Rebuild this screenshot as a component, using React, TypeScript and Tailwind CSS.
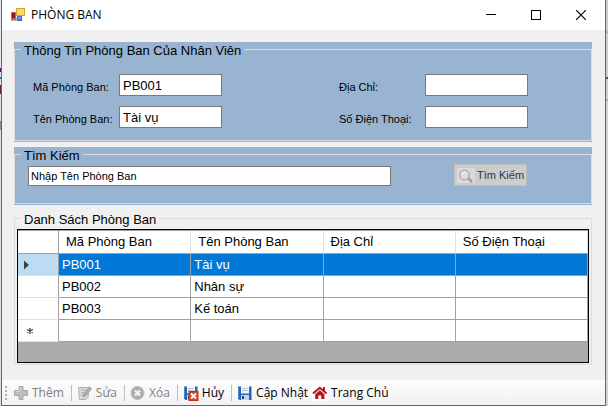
import type { ReactNode } from "react";

function AppIcon() {
  return (
    <svg width="14" height="14" viewBox="0 0 14 14">
      <rect x="5" y="0" width="9" height="8" fill="#d9a02a" />
      <rect x="6" y="1" width="7" height="6" fill="#f9dc62" />
      <rect x="0" y="4" width="5" height="8" fill="#c4625e" />
      <rect x="1" y="5" width="3" height="5" fill="#a01414" />
      <rect x="6" y="8" width="5" height="5" fill="#2f6fd8" />
      <rect x="7" y="9" width="3" height="2" fill="#6f9fee" />
      <path d="M0 12.500h5M5.500 9v4" stroke="#b9b9c4" />
    </svg>
  );
}

function PlusIcon() {
  return (
    <svg width="16" height="16" viewBox="0 0 16 16">
      <path d="M6 1.500h4v4h4.500v5H10v4H6v-4H1.500v-5H6z" fill="#bdbdbd" stroke="#a9a9a9" />
      <path d="M7 2.500v4H2.500" fill="none" stroke="#d6d6d6" />
    </svg>
  );
}

function EditIcon() {
  return (
    <svg width="16" height="16" viewBox="0 0 16 16">
      <path d="M1.500 2.500h10.500l-1 10-2 2H2.500z" fill="#dadada" stroke="#b0b0b0" />
      <path d="M4 5h5M4 7.500h3M4 10h2" stroke="#b4b4b4" />
      <path d="M6 12l1-3.500L12.500 2l2 1.700L8.800 10.500z" fill="#b0b0b0" stroke="#9c9c9c" />
    </svg>
  );
}

function DeleteIcon() {
  return (
    <svg width="16" height="16" viewBox="0 0 16 16">
      <circle cx="7.500" cy="8" r="6.500" fill="#acacac" stroke="#bcbcbc" />
      <path d="M4.900 5.400l5.200 5.200M10.100 5.400l-5.200 5.200" stroke="#f2f2f2" strokeWidth="2.200" />
    </svg>
  );
}

function SaveIcon({ cancel = false }: { cancel?: boolean }) {
  return (
    <svg width="16" height="16" viewBox="0 0 16 16">
      <path d="M1 1.500h13.500v13.500H2.500L1 13.500z" fill="#2465b5" />
      <path d="M1.500 2v11" stroke="#4d88cf" />
      <rect x="4" y="1" width="8" height="7.500" fill="#f4f7fb" />
      <path d="M5 3.500h6M5 5.500h6" stroke="#b4bfcd" />
      <rect x="4" y="10" width="8" height="5" fill="#c8d5e4" />
      <rect x="5" y="11" width="2" height="3" fill="#174987" />
      {cancel && (
        <>
          <rect x="6" y="6.500" width="9" height="9" fill="#dc4026" stroke="#c03218" />
          <path d="M8 8.500l5 5M13 8.500l-5 5" stroke="#fff" strokeWidth="2" />
        </>
      )}
    </svg>
  );
}

function HomeIcon() {
  return (
    <svg width="16" height="16" viewBox="0 0 16 16">
      <rect width="16" height="16" fill="#fff" />
      <path d="M11 2h2v4h-2z" fill="#bd1118" />
      <path d="M1 8.500L7.800 2.800l6.700 5.700" fill="none" stroke="#bd1118" strokeWidth="2" />
      <path d="M3.200 9.200L7.800 5.300l4.600 3.900V14H9.300v-3.500h-3V14H3.200z" fill="#bd1118" />
    </svg>
  );
}

function SearchIcon() {
  return (
    <svg width="18" height="15" viewBox="0 0 18 15">
      <rect width="18" height="15" fill="#dadada" />
      <path d="M11 10l4 4" stroke="#a0a0a0" strokeWidth="2.500" />
      <circle cx="7.500" cy="7" r="4.800" fill="#e0e0e0" stroke="#b0b0b0" strokeWidth="1.500" />
      <path d="M5 6.500a3 3 0 0 1 3-2.500" fill="none" stroke="#f6f6f6" />
    </svg>
  );
}

function Group({ title, className, children }: { title: string; className: string; children: ReactNode }) {
  return (
    <section className={className}>
      <fieldset className="min-w-0 border border-[#dcdcdc]">
        <legend className="ml-[6px] h-[15px] px-[3px] text-[13px] leading-[17px]">{title}</legend>
        {children}
      </fieldset>
    </section>
  );
}

function Field({ id, label, value = "" }: { id: string; label: string; value?: string }) {
  return (
    <>
      <label htmlFor={id} className="pt-[5px] text-[11px] leading-4 whitespace-nowrap">{label}</label>
      <input id={id} type="text" defaultValue={value} className="h-[22px] w-full border border-[#7a7a7a] bg-white px-[3px] text-[13px] outline-none" />
    </>
  );
}

function ToolButton({ icon, label, disabled = false }: { icon: ReactNode; label: string; disabled?: boolean }) {
  return (
    <button type="button" disabled={disabled} className="flex h-full items-center gap-[3px] px-[2px] text-black disabled:text-[#7f7f7f]">
      {icon}
      {label}
    </button>
  );
}

function Separator() {
  return <span className="mr-[3px] ml-[5px] h-4 w-px bg-[#bdbdbd]" />;
}

const columns = ["Mã Phòng Ban", "Tên Phòng Ban", "Địa Chỉ", "Số Điện Thoại"];
const rows = [
  ["PB001", "Tài vụ", "", ""],
  ["PB002", "Nhân sự", "", ""],
  ["PB003", "Kế toán", "", ""],
  ["", "", "", ""],
];

export default function App() {
  return (
    <div className="flex font-['Liberation_Sans',Arial,sans-serif] text-black">
      <div className="w-px shrink-0 bg-[linear-gradient(#e4e6ea_0_68px,#402040_68px_72px,#e4e6ea_72px_77px,#1a76c4_77px_79px,#e4e6ea_79px_85px,#6a1e48_85px_94px,#e0e0e0_94px_121px,#8c8c8c_121px_130px,#dedede_130px)]" />
      <div className="min-w-0 flex-1 border-x border-b border-[#1979ca] bg-[#f0f0f0]">
        <header className="flex h-[30px] items-center bg-white pr-[2px] pl-[9px]">
          <AppIcon />
          <h1 className="flex-1 pl-[6px] font-['Open_Sans','Noto_Sans',sans-serif] text-[12px]">PHÒNG BAN</h1>
          <button type="button" aria-label="Minimize" className="flex h-full w-[45px] items-center justify-center">
            <svg width="10" height="10"><path d="M0 4.500h10" stroke="#000" /></svg>
          </button>
          <button type="button" aria-label="Maximize" className="flex h-full w-[45px] items-center justify-center">
            <svg width="10" height="10"><rect x="0.500" y="0.500" width="9" height="9" fill="none" stroke="#000" /></svg>
          </button>
          <button type="button" aria-label="Close" className="flex h-full w-[45px] items-center justify-center">
            <svg width="10" height="10"><path d="M0 0l10 10M10 0L0 10" stroke="#000" strokeWidth="1.200" /></svg>
          </button>
        </header>

        <main className="pt-3 pr-[13px] pb-[15px] pl-3">
          <Group title="Thông Tin Phòng Ban Của Nhân Viên" className="bg-[#99b4d1] pb-px">
            <div className="grid grid-cols-[86px_103px_1fr_86px_103px] gap-y-[10px] pt-[17px] pr-[63px] pb-3 pl-[18px]">
              <Field id="code" label="Mã Phòng Ban:" value="PB001" />
              <span />
              <Field id="address" label="Địa Chỉ:" />
              <Field id="name" label="Tên Phòng Ban:" value="Tài vụ" />
              <span />
              <Field id="phone" label="Số Điện Thoại:" />
            </div>
          </Group>

          <Group title="Tìm Kiếm" className="mt-[5px] bg-[#99b4d1] pb-px">
            <div className="flex items-end gap-[63px] pt-[2px] pr-16 pb-[17px] pl-[13px]">
              <input type="text" aria-label="Tìm Kiếm" defaultValue="Nhập Tên Phòng Ban" className="h-5 min-w-0 flex-1 border border-[#7a7a7a] bg-white px-[2px] text-[11px] outline-none" />
              <button type="button" disabled className="flex h-[22px] w-[73px] items-center gap-[2px] border border-[#bfbfbf] bg-[#cccccc] pl-[2px] text-[11px] whitespace-nowrap text-[#2a3550]">
                <SearchIcon />
                Tìm Kiếm
              </button>
            </div>
          </Group>

          <Group title="Danh Sách Phòng Ban" className="mt-[6px]">
            <div className="mx-[2px] mt-[3px] mb-px border border-black bg-[#ababab] pb-5">
              <table className="w-full table-fixed border-separate border-spacing-0 bg-white text-[13px] leading-4">
                <colgroup>
                  <col className="w-[41px]" />
                  <col />
                  <col />
                  <col />
                  <col />
                </colgroup>
                <thead>
                  <tr className="h-6">
                    <th className="border-t border-r border-b border-[#a0a0a0] p-0" />
                    {columns.map((c) => (
                      <th key={c} className="border-t border-r border-b border-t-[#a0a0a0] border-r-[#e0e0e0] border-b-[#a0a0a0] py-0 pr-0 pl-[7px] text-left font-normal">{c}</th>
                    ))}
                  </tr>
                </thead>
                <tbody>
                  {rows.map((r, i) => (
                    <tr key={i} className={i === 0 ? "h-[22px] bg-[#0078d7] text-white" : "h-[22px]"}>
                      <th scope="row" className={`border-r border-b border-r-[#a0a0a0] border-b-[#e0e0e0] py-0 pr-0 pl-[6px] ${i === 0 ? "bg-[#bcdcf4]" : ""}`}>
                        {i === 0 && <svg width="6" height="10" className="block"><path d="M0 0.500l5 4.500-5 4.500z" fill="#404040" /></svg>}
                        {i === 3 && (
                          <svg width="10" height="8" viewBox="0 0 10 8" className="block">
                            <path d="M6 1v6M3 2.500l6 3M9 2.500l-6 3" stroke="#404040" strokeWidth="1.300" />
                          </svg>
                        )}
                      </th>
                      {r.map((v, j) => (
                        <td key={j} className="border-r border-b border-[#a0a0a0] py-0 pr-0 pl-[3px]">{v}</td>
                      ))}
                    </tr>
                  ))}
                </tbody>
              </table>
            </div>
          </Group>
        </main>

        <footer className="flex h-[25px] items-center bg-gradient-to-b from-[#fdfdfd] to-[#f1f1f1] pl-[3px] font-['Open_Sans','Noto_Sans',sans-serif] text-[12px] leading-4 whitespace-nowrap">
          <svg width="6" height="16"><path d="M1 1v14" stroke="#b0b0b0" strokeWidth="2" strokeDasharray="2 2" /></svg>
          <ToolButton icon={<PlusIcon />} label="Thêm" disabled />
          <Separator />
          <ToolButton icon={<EditIcon />} label="Sửa" disabled />
          <Separator />
          <ToolButton icon={<DeleteIcon />} label="Xóa" disabled />
          <Separator />
          <ToolButton icon={<SaveIcon cancel />} label="Hủy" />
          <Separator />
          <ToolButton icon={<SaveIcon />} label="Cập Nhật" />
          <ToolButton icon={<HomeIcon />} label="Trang Chủ" />
        </footer>
      </div>
      <div className="w-[2px] shrink-0 bg-[linear-gradient(#cdcdcd_0_31px,#a8a8a8_31px_33px,#cfcfcf_33px_77px,#1060a8_77px_79px,#cfcfcf_79px_99px,#a8a8a8_99px_101px,#d4d4d4_101px)]" />
    </div>
  );
}
